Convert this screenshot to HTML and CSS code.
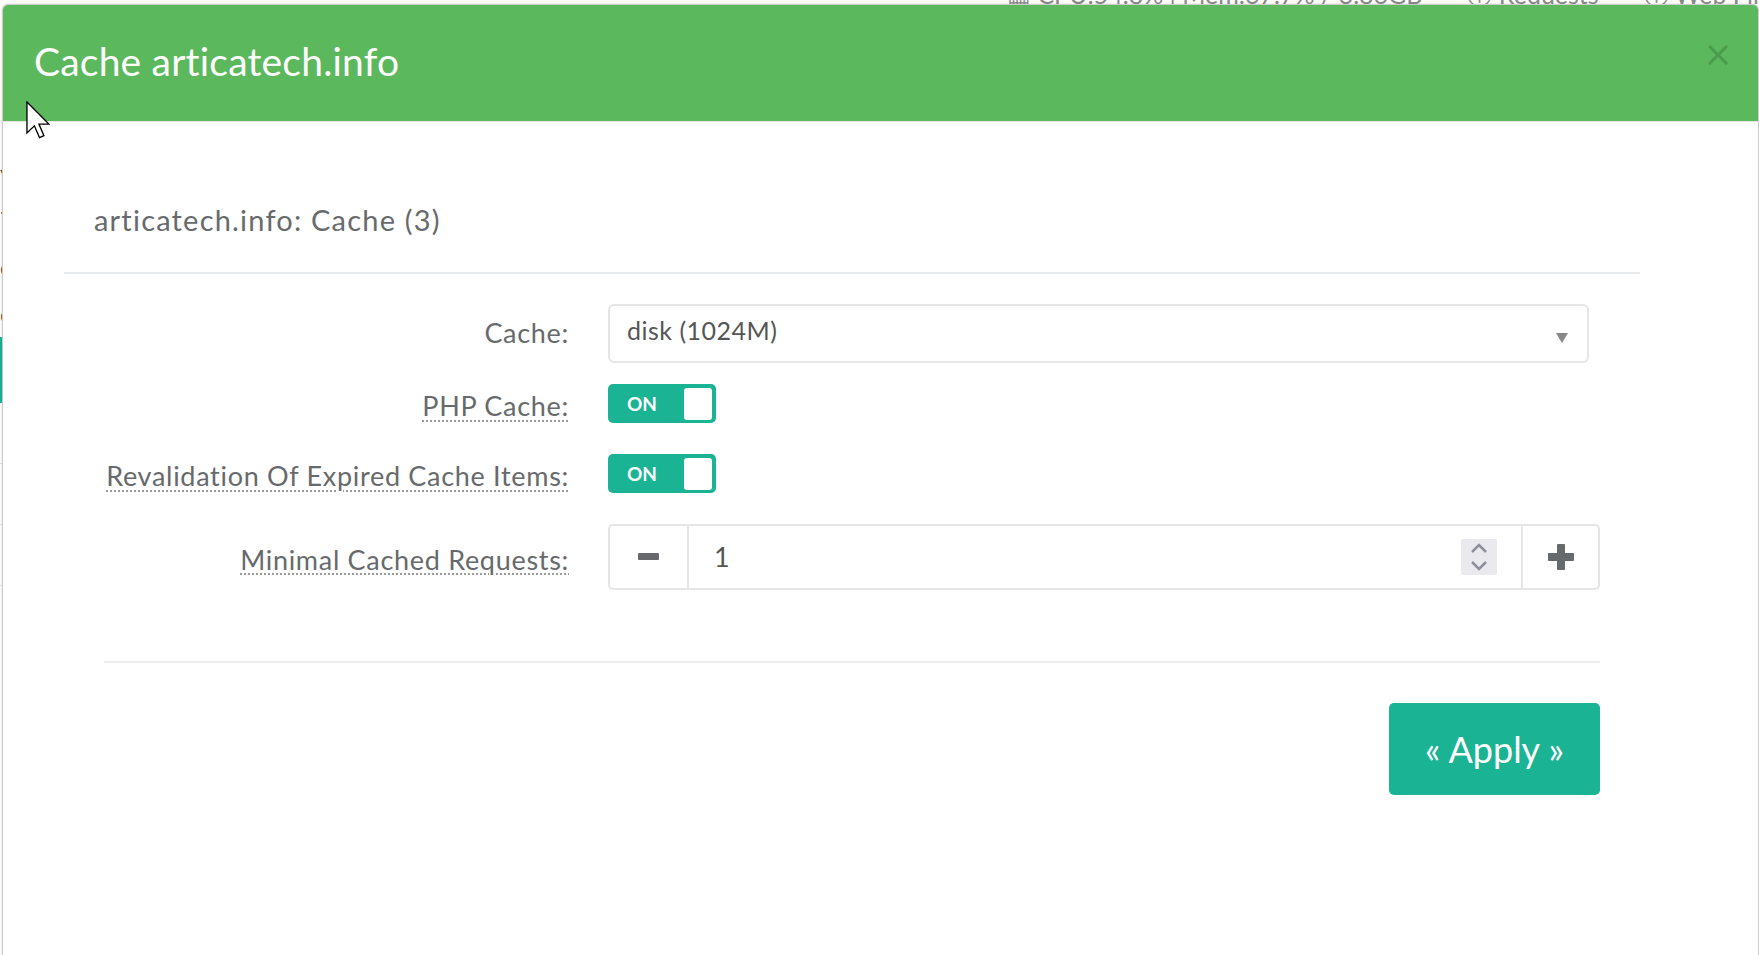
FILE: index.html
```html
<!DOCTYPE html>
<html lang="en">
<head>
<meta charset="UTF-8">
<meta name="viewport" content="width=device-width, initial-scale=1.0">
<title>Cache articatech.info</title>
<link rel="stylesheet" href="styles.css">
</head>
<body>
  <div class="page">
    <div class="page-nav">
      <span class="nav-item">&#9638; CPU:54.8% | Mem:67.7% / 3.86GB</span>
      <span class="nav-item">&#9432; Requests</span>
      <span class="nav-item">&#9432; Web Filtering</span>
    </div>
    <div class="page-side">
      <div class="side-item">y</div>
      <div class="side-item">7</div>
      <div class="side-item">c</div>
      <div class="side-item">e</div>
      <div class="side-btn"></div>
      <div class="side-item line"></div>
      <div class="side-item line"></div>
      <div class="side-item line"></div>
    </div>
  </div>

  <div class="modal">
    <div class="modal-header">
      <h4 class="modal-title">Cache articatech.info</h4>
      <button class="close" type="button">
        <svg width="20" height="20" viewBox="0 0 20 20"><path d="M2 2L18 18M18 2L2 18" stroke="#4b9b4c" stroke-width="3" stroke-linecap="square"/></svg>
      </button>
    </div>

    <div class="modal-body">
      <div class="panel">
        <h3 class="panel-title">articatech.info: Cache (3)</h3>

        <div class="form">
          <div class="form-row row-select">
            <label class="form-label">Cache:</label>
            <div class="select">
              <span class="select-text">disk (1024M)</span>
              <svg class="select-arrow" width="12" height="10" viewBox="0 0 12 10"><polygon points="0,0 12,0 6,10" fill="#888"/></svg>
            </div>
          </div>

          <div class="form-row">
            <label class="form-label help"><span>PHP Cache:</span></label>
            <div class="switch">
              <span class="switch-text">ON</span>
              <span class="switch-knob"></span>
            </div>
          </div>

          <div class="form-row">
            <label class="form-label help"><span>Revalidation Of Expired Cache Items:</span></label>
            <div class="switch">
              <span class="switch-text">ON</span>
              <span class="switch-knob"></span>
            </div>
          </div>

          <div class="form-row row-number">
            <label class="form-label help"><span>Minimal Cached Requests:</span></label>
            <div class="spinner">
              <span class="spin-btn">
                <svg width="21" height="7" viewBox="0 0 21 7"><rect width="21" height="7" rx="1" fill="#676a6c"/></svg>
              </span>
              <span class="spin-value">
                <span class="spin-num">1</span>
                <svg width="36" height="36" viewBox="0 0 36 36">
                  <rect width="36" height="36" rx="2" fill="#e9e9ee"/>
                  <polyline points="11,13 18,6 25,13" fill="none" stroke="#8e8e9c" stroke-width="2.5"/>
                  <polyline points="11,23 18,30 25,23" fill="none" stroke="#8e8e9c" stroke-width="2.5"/>
                </svg>
              </span>
              <span class="spin-btn plus">
                <svg width="26" height="26" viewBox="0 0 26 26"><rect x="9" y="0" width="8" height="26" rx="1" fill="#676a6c"/><rect x="0" y="9" width="26" height="8" rx="1" fill="#676a6c"/></svg>
              </span>
            </div>
          </div>

          <div class="form-sep"></div>

          <div class="form-actions">
            <button class="btn-apply" type="button">&laquo; Apply &raquo;</button>
          </div>
        </div>
      </div>
    </div>
  </div>

  <svg class="cursor" width="24" height="38" viewBox="0 0 12.6 19.6" preserveAspectRatio="none">
    <path d="M0.5 0.5L0.5 16.5L4.4 12.8L7.1 18.9L9.4 17.9L6.8 11.9L12 11.9Z" fill="#fff" stroke="#000" stroke-width="0.7" stroke-linejoin="miter"/>
  </svg>
</body>
</html>
```

FILE: styles.css
```css
body {
  margin: 0;
  height: 955px;
  overflow: hidden;
  position: relative;
  background: #fff;
  font-family: "Lato", "Open Sans", sans-serif;
  color: #676a6c;
}

/* page behind the dialog */
.page-nav {
  height: 4px;
  overflow: hidden;
  display: flex;
  align-items: flex-end;
  gap: 45px;
  padding-left: 1007px;
  white-space: nowrap;
  font-size: 25px;
  color: #8a8a8a;
}

.nav-item {
  line-height: 20px;
}

.page-side {
  width: 200px;
  padding-top: 145px;
  font-size: 24px;
  color: #555;
}

.side-item {
  height: 47px;
  line-height: 47px;
}

.side-item.line {
  height: 60px;
  border-bottom: 1px solid #e5e5e5;
}

.side-btn {
  height: 66px;
  background: #1ab394;
}

/* dialog */
.modal {
  position: absolute;
  left: 2px;
  top: 4px;
  right: 0;
  bottom: -10px;
  background: #fff;
  border: 1px solid rgba(0, 0, 0, 0.2);
  border-radius: 6px;
  box-shadow: 0 0 3px rgba(0, 0, 0, 0.15);
}

.modal-header {
  height: 117px;
  box-sizing: border-box;
  background: #5cb85c;
  border-radius: 5px 5px 0 0;
  border-bottom: 1px solid #e5e5e5;
  display: flex;
  align-items: center;
  justify-content: space-between;
  padding: 0 30px 4px 31px;
}

.modal-title {
  margin: 0;
  font-size: 39px;
  font-weight: 400;
  letter-spacing: 0.2px;
  line-height: 1.2;
  color: #fff;
}

.close {
  align-self: flex-start;
  margin-top: 40px;
  padding: 0;
  border: 0;
  background: none;
  width: 20px;
  height: 20px;
  cursor: pointer;
}

.close svg {
  display: block;
}

.panel {
  margin-left: 61px;
  width: 1576px;
  padding-top: 81px;
}

.panel-title {
  margin: 0;
  padding: 0 30px 34px;
  font-size: 29px;
  font-weight: 400;
  letter-spacing: 1.2px;
  line-height: 1.2;
  color: #676a6c;
  border-bottom: 2px solid #e7eaec;
}

.form {
  padding: 30px 40px 0;
}

.form-row {
  display: grid;
  grid-template-columns: 465px 1fr;
  column-gap: 39px;
  align-items: center;
  margin-bottom: 31px;
}

.form-row.row-select {
  margin-bottom: 21px;
}

.form-row.row-number {
  margin-bottom: 0;
}

.form-label {
  display: flex;
  justify-content: flex-end;
  white-space: nowrap;
  font-size: 27px;
  letter-spacing: 0.7px;
  line-height: 1.2;
  color: #676a6c;
}

.form-label.help {
  padding-top: 6px;
}

.form-label.help span {
  text-decoration: underline dotted #9a9a9a;
  text-decoration-thickness: 2px;
  text-underline-offset: 4px;
}

.select {
  height: 59px;
  box-sizing: border-box;
  margin-right: 11px;
  border: 2px solid #e5e6e7;
  border-radius: 6px;
  display: flex;
  align-items: center;
  justify-content: space-between;
  padding: 0 19px 0 17px;
}

.select-text {
  font-size: 25px;
  letter-spacing: 0.5px;
  line-height: 1.2;
  color: #555;
  margin-bottom: 6px;
}

.select-arrow {
  margin-top: 9px;
}

.switch {
  width: 108px;
  height: 39px;
  box-sizing: border-box;
  background: #1ab394;
  border-radius: 5px;
  display: flex;
  align-items: center;
  justify-content: space-between;
  padding: 4px 4px 3px 19px;
}

.switch-text {
  font-size: 19px;
  font-weight: 700;
  color: #fff;
}

.switch-knob {
  width: 28px;
  height: 32px;
  background: #fff;
  border-radius: 3px;
}

.spinner {
  height: 66px;
  box-sizing: border-box;
  border: 2px solid #e5e6e7;
  border-radius: 5px;
  display: flex;
}

.spin-btn {
  width: 77px;
  display: flex;
  align-items: center;
  justify-content: center;
  border-right: 2px solid #e5e6e7;
}

.spin-btn.plus {
  width: 75px;
  border-right: 0;
  border-left: 2px solid #e5e6e7;
}

.spin-value {
  flex: 1;
  display: flex;
  align-items: center;
  justify-content: space-between;
  padding: 0 24px 0 25px;
}

.spin-num {
  font-size: 27px;
  color: #555;
}

.form-sep {
  margin-top: 71px;
  border-top: 2px solid #eeeeee;
}

.form-actions {
  display: flex;
  justify-content: flex-end;
  padding-top: 40px;
}

.btn-apply {
  width: 211px;
  height: 92px;
  border: 0;
  border-radius: 5px;
  background: #1ab394;
  color: #fff;
  font-family: inherit;
  font-size: 36px;
  cursor: pointer;
}

.cursor {
  position: absolute;
  left: 26px;
  top: 101px;
}
```
